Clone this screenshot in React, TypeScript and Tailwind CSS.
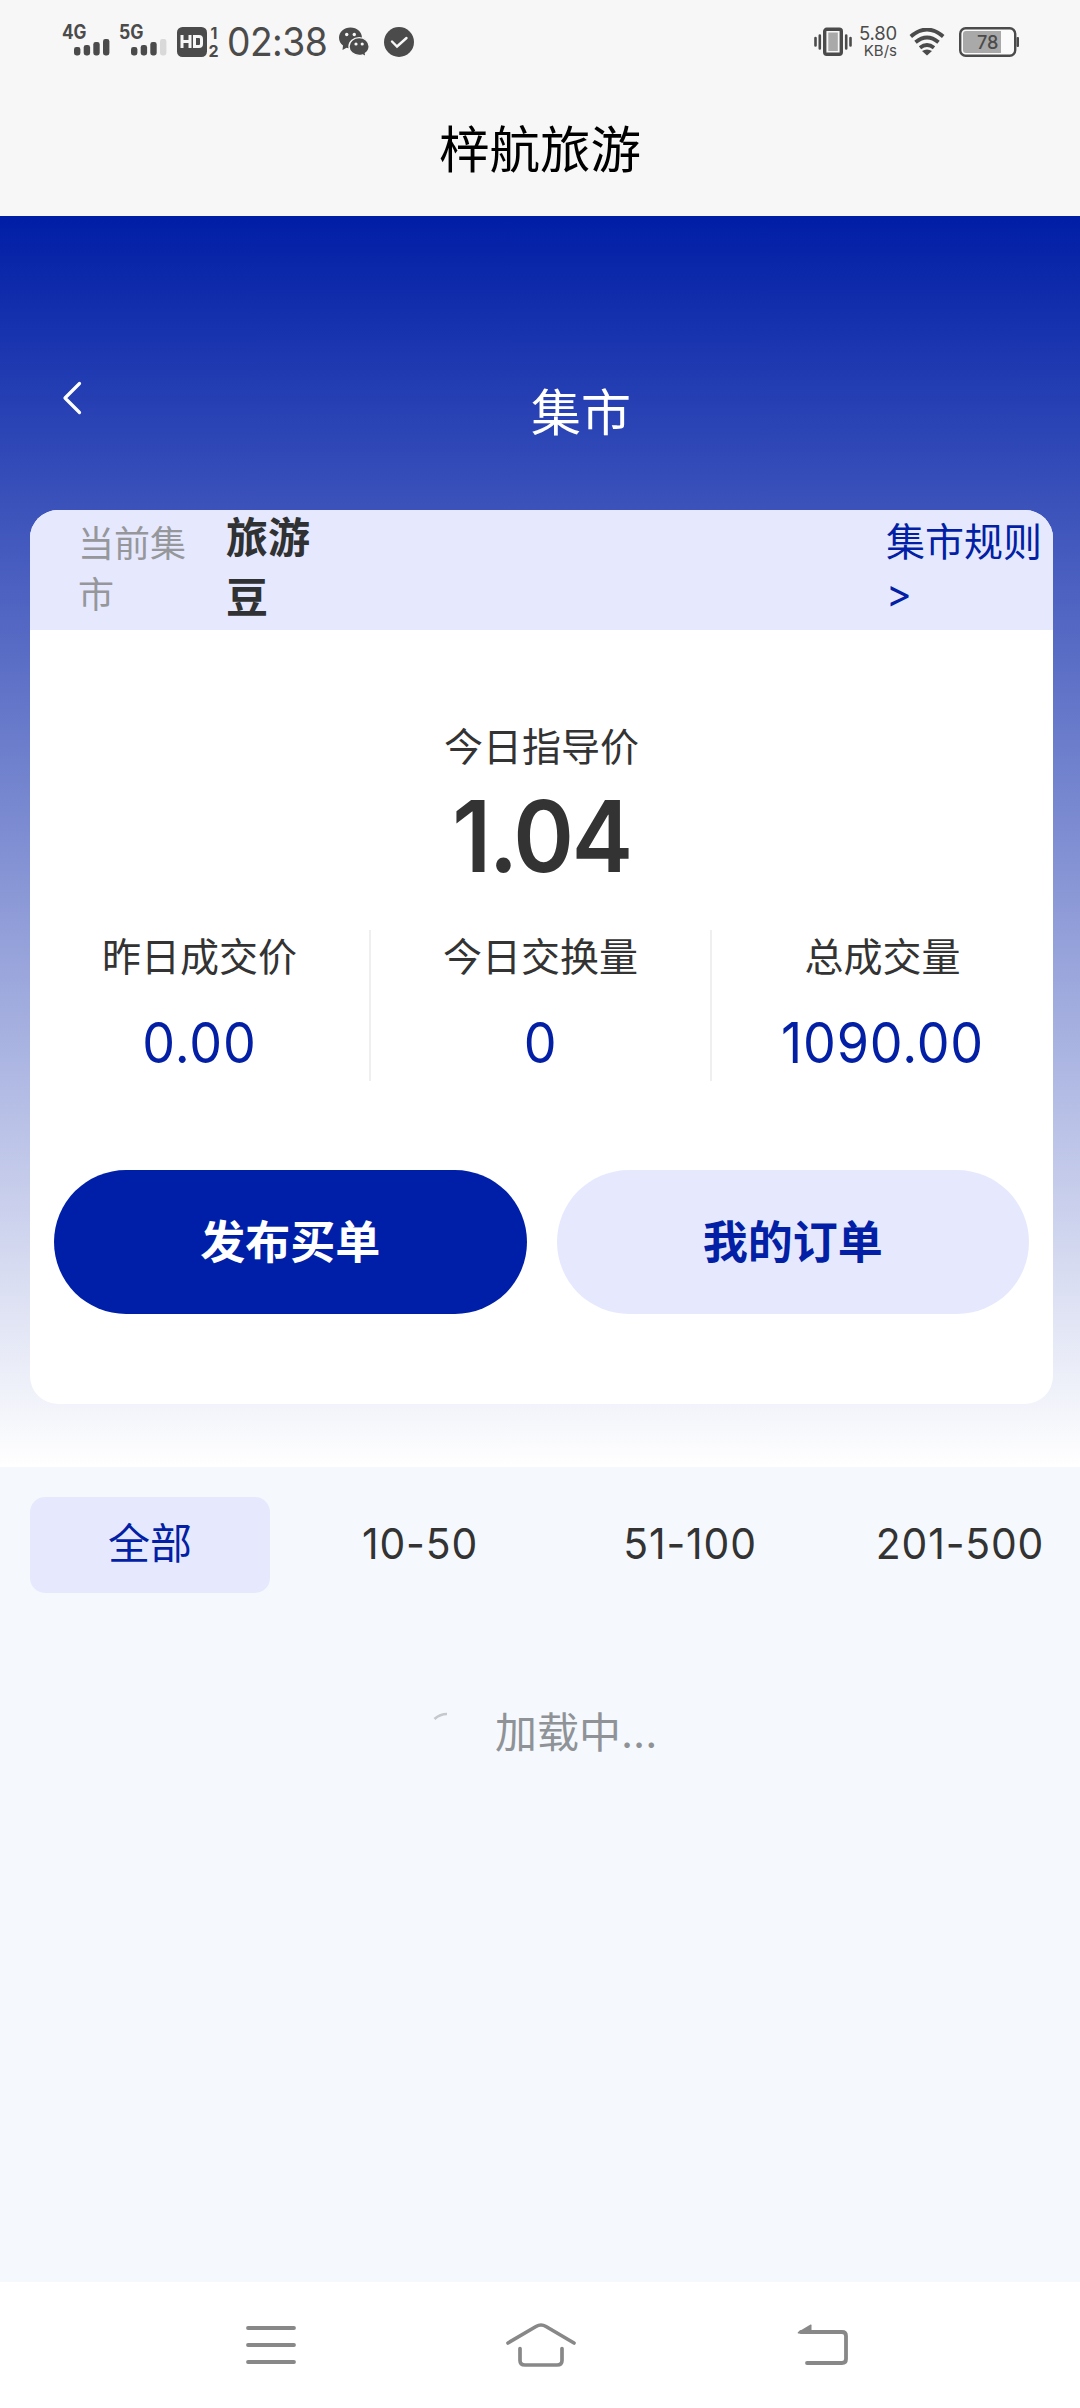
import React from "react";

const INK = "#4b4b4b";

function Signal({ label, faded }: { label: string; faded?: boolean }) {
  return (
    <svg width="50" height="46" viewBox="0 -6 50 46" className="block">
      <text x="0" y="16.5" fontFamily="Inter" fontWeight="700" fontSize="19.5" textLength="24.5" lengthAdjust="spacingAndGlyphs" fill={INK}>{label}</text>
      <rect x="12" y="25" width="6.4" height="8.4" rx="2.4" fill={INK} />
      <rect x="21.7" y="23" width="6.4" height="10.4" rx="2.4" fill={INK} />
      <rect x="31.3" y="20" width="6.4" height="13.4" rx="2.4" fill={INK} />
      <rect x="41" y="17" width="6.4" height="16.4" rx="2.4" fill={faded ? "#d9d9d9" : INK} />
    </svg>
  );
}

function StatusBar() {
  return (
    <div className="flex h-[84px] items-center">
      <div className="-mt-[7px] ml-[62px]"><Signal label="4G" /></div>
      <div className="-mt-[7px] ml-[7px]"><Signal label="5G" faded /></div>
      <svg width="46" height="48" viewBox="0 -8 46 48" className="ml-[8px] block">
        <rect x="0" y="1" width="30" height="30" rx="5.5" fill={INK} />
        <path d="M5 9v13M13 9v13M5 15.5h8M17.500 10.500v10h4.500q2.500 0 2.500-2.500v-5q0-2.500-2.500-2.500z" fill="none" stroke="#f7f7f7" strokeWidth="3" />
        <text x="33.500" y="12.500" fontFamily="Inter" fontWeight="700" fontSize="16" fill={INK}>1</text>
        <text x="31.500" y="30.500" fontFamily="Inter" fontWeight="700" fontSize="16" fill={INK}>2</text>
      </svg>
      <div className="ml-[4px] w-[101px] origin-left scale-x-[0.955] whitespace-nowrap text-[39px] leading-[84px] tracking-[-0.600px] text-[#4b4b4b]">02:38</div>
      <svg width="31" height="31" viewBox="0 0 31 31" className="ml-[11px] block">
        <path d="M11.500 0.500C5 .5 0 5 0 10.800c0 3.200 1.600 5.900 4 7.800L3.500 23l4-2.200q2 .6 4 .6C18 21.400 23 16.800 23 10.900S18 .5 11.500.5z" fill={INK} />
        <circle cx="7.700" cy="7.500" r="1.700" fill="#f7f7f7" />
        <circle cx="15.300" cy="7.500" r="1.700" fill="#f7f7f7" />
        <path d="M20.200 10.600c-5.700 0-10.200 4-10.200 8.900s4.500 9 10.200 9q1.900 0 3.500-.6l3.300 2-.6-3.600c2.400-1.600 3.800-4 3.800-6.800 0-4.900-4.400-8.900-10-8.900z" fill={INK} stroke="#f7f7f7" strokeWidth="1.400" />
        <circle cx="17" cy="17" r="1.600" fill="#f7f7f7" />
        <circle cx="23.200" cy="17" r="1.600" fill="#f7f7f7" />
      </svg>
      <svg width="30" height="30" viewBox="0 0 30 30" className="ml-[14px] block">
        <circle cx="15" cy="15" r="15" fill={INK} />
        <path d="M8 14.500l5 5 9.500-8.500" fill="none" stroke="#f7f7f7" strokeWidth="2.400" strokeLinecap="round" />
      </svg>
      <svg width="38" height="30" viewBox="0 0 38 30" className="ml-auto block">
        <rect x="10.700" y="2.300" width="16.600" height="25" rx="2" fill="none" stroke={INK} strokeWidth="3.400" />
        <rect x="14.300" y="5.500" width="9.500" height="18.500" fill="#a9a9a9" />
        <path d="M1.500 11v7.500M5.800 8.500v13M32.200 8.500v13M36.500 11v7.500" stroke={INK} strokeWidth="2.600" strokeLinecap="round" />
      </svg>
      <div className="mr-[3px] ml-[5px] flex w-[40px] flex-col items-end text-[#4b4b4b]">
        <span className="text-[18.500px] leading-[17px] tracking-[-0.200px]">5.80</span>
        <span className="text-[15px] leading-[17px]">KB/s</span>
      </div>
      <svg width="36" height="28" viewBox="0 0 36 28" className="ml-[9px] block">
        <path d="M1.800 8.500Q18-5.500 34.200 8.500M6.500 14.200q11.500-9.500 23 0M11 19.700q7-5.500 14 0" fill="none" stroke={INK} strokeWidth="3.800" />
        <path d="M13 23q5-3 10 0l-5 4.500z" fill={INK} />
      </svg>
      <svg width="61" height="30" viewBox="0 0 61 30" className="mr-[60px] ml-[14px] block">
        <rect x="1.200" y="1.200" width="55" height="27.600" rx="5.500" fill="#fbfbfb" stroke={INK} strokeWidth="2.400" />
        <path d="M7 4h35v22H7q-3 0-3-3V7q0-3 3-3z" fill="#a9a9a9" />
        <rect x="57.500" y="10" width="2.500" height="10" rx="1" fill={INK} />
        <text x="18" y="21.800" fontFamily="Inter" fontWeight="500" fontSize="18.500" textLength="21.500" lengthAdjust="spacingAndGlyphs" fill={INK}>78</text>
      </svg>
    </div>
  );
}

const stats = [
  { label: "昨日成交价", value: "0.00" },
  { label: "今日交换量", value: "0" },
  { label: "总成交量", value: "1090.00" },
];

const tabs = ["全部", "10-50", "51-100", "201-500"];

function MarketCard() {
  return (
    <div className="flex h-[894px] w-[1023px] flex-col overflow-hidden rounded-[28px] bg-white">
      <div className="flex h-[120px] items-center bg-[#e6e9fd]">
        <div className="ml-[48px] w-[120px] text-[36px] leading-[51px] text-[#96979b]">当前集市</div>
        <div className="-mt-[4px] ml-[28px] w-[90px] text-[42px] leading-[60px] font-bold text-[#303133]">旅游豆</div>
        <div className="-mt-[4px] mr-[9px] ml-auto w-[158px] text-[39px] leading-[52px] text-[#021fa5]">集市规则 &gt;</div>
      </div>
      <div className="mt-[90px] text-center text-[39px] leading-[54px] text-[#333]">今日指导价</div>
      <div className="mt-[12px] scale-x-[0.93] text-center text-[99px] leading-[100px] font-semibold tracking-[-2.500px] text-[#333]">1.04</div>
      <div className="mt-[44px] grid h-[150px] grid-cols-3">
        {stats.map((s, i) => (
          <div key={s.label} className={i < 2 ? "border-r-2 border-[#efefef] text-center" : "text-center"}>
            <div className="text-[39px] leading-[54px] text-[#333]">{s.label}</div>
            <div className="mt-[21px] scale-x-[0.93] text-[56px] leading-[76px] tracking-[0.900px] text-[#021fa5]">{s.value}</div>
          </div>
        ))}
      </div>
      <div className="mt-[90px] flex gap-[30px] px-[24px]">
        <button className="h-[144px] flex-1 rounded-full bg-[#001fa8] pt-[2px] text-[45px] font-bold text-white">发布买单</button>
        <button className="h-[144px] flex-1 rounded-full bg-[#e6e9fd] pt-[2px] text-[45px] font-bold text-[#021fa5]">我的订单</button>
      </div>
    </div>
  );
}

function NavBar() {
  return (
    <div className="flex h-[126px] items-center bg-white">
      <svg width="50" height="40" viewBox="0 0 50 40" className="ml-[246px] block">
        <path d="M2 3h46M2 20h46M2 37h46" stroke="#888" strokeWidth="3.800" strokeLinecap="round" />
      </svg>
      <svg width="70" height="44" viewBox="0 0 70 44" className="ml-[210px] block">
        <path d="M2 20L30 3.500q5-3 10 0L68 20" fill="none" stroke="#888" strokeWidth="3.700" strokeLinecap="round" />
        <path d="M14 25.500v12q0 4.500 5 4.500h32q5 0 5-4.500v-12" fill="none" stroke="#888" strokeWidth="3.700" strokeLinecap="round" />
      </svg>
      <svg width="52" height="42" viewBox="0 0 52 42" className="ml-[221px] block">
        <path d="M4 8h41q4 0 4 4v23q0 4-4 4H10" fill="none" stroke="#888" strokeWidth="3.800" strokeLinecap="round" />
        <path d="M1 8L13.500 0.500q1-.3 1 .7V9.500H2q-2 0-1-1.500z" fill="#888" />
      </svg>
    </div>
  );
}

export default function App() {
  return (
    <div className="flex h-[2408px] w-[1080px] flex-col overflow-hidden bg-[#f5f9fd] font-['Inter','Noto_Sans_CJK_SC',sans-serif]">
      <header className="h-[216px] bg-[#f7f7f7]">
        <StatusBar />
        <h1 className="text-center text-[50.500px] leading-[132px] text-black">梓航旅游</h1>
      </header>
      <section className="h-[1251px] bg-linear-to-b/srgb from-[#001ea6] to-white">
        <div className="flex h-[294px] items-start">
          <svg width="20" height="34" viewBox="0 0 20 34" className="mt-[165px] ml-[62px] block">
            <path d="M17.500 2.500L3 17l14.500 14.500" fill="none" stroke="#fff" strokeWidth="3.200" strokeLinecap="round" strokeLinejoin="round" />
          </svg>
          <h2 className="mt-[161px] ml-[449px] text-[50px] leading-[72px] text-white">集市</h2>
        </div>
        <div className="ml-[30px]"><MarketCard /></div>
      </section>
      <nav className="mt-[30px] ml-[30px] flex gap-[30px]">
        {tabs.map((t, i) => (
          <button
            key={t}
            className={
              i === 0
                ? "h-[96px] w-[240px] shrink-0 rounded-[15px] bg-[#e6e9fd] pb-[3px] text-[42px] text-[#021fa5]"
                : "h-[96px] w-[240px] shrink-0 scale-x-[0.95] rounded-[15px] pb-[3px] text-[43px] tracking-[0.900px] text-[#333]"
            }
          >
            {t}
          </button>
        ))}
      </nav>
      <div className="mt-[108px] ml-[433px] flex items-start">
        <svg width="15" height="9" viewBox="0 0 15 9" className="mt-[11px] block">
          <path d="M1.500 7Q7 2 14 2" fill="none" stroke="#c5c9cc" strokeWidth="2.600" />
        </svg>
        <div className="mt-[2px] ml-[47px] text-[42px] leading-[60px] text-[#8f9397]">加载中...</div>
      </div>
      <div className="mt-auto"><NavBar /></div>
    </div>
  );
}
